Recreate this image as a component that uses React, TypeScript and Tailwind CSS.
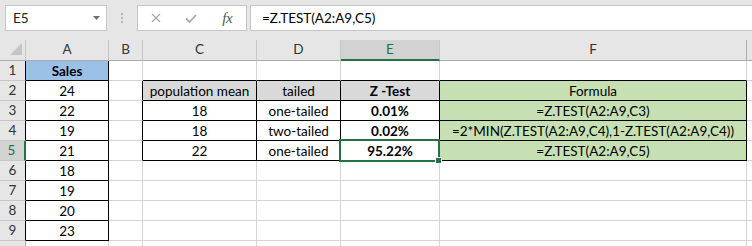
import React from "react";

const FONT = "font-['Lato','Liberation_Sans',sans-serif]";

type CellDef = { t?: string; bold?: boolean; bg?: string };

const data: Record<string, CellDef> = {
  "1-1": { t: "Sales", bold: true, bg: "bg-[#9bc2e6]" },
  "2-1": { t: "24" },
  "3-1": { t: "22" },
  "4-1": { t: "19" },
  "5-1": { t: "21" },
  "6-1": { t: "18" },
  "7-1": { t: "19" },
  "8-1": { t: "20" },
  "9-1": { t: "23" },
  "2-3": { t: "population mean", bg: "bg-[#d9d9d9]" },
  "2-4": { t: "tailed", bg: "bg-[#d9d9d9]" },
  "2-5": { t: "Z -Test", bold: true, bg: "bg-[#d9d9d9]" },
  "2-6": { t: "Formula", bg: "bg-[#c6e0b4]" },
  "3-3": { t: "18" },
  "3-4": { t: "one-tailed" },
  "3-5": { t: "0.01%", bold: true },
  "3-6": { t: "=Z.TEST(A2:A9,C3)", bg: "bg-[#c6e0b4]" },
  "4-3": { t: "18" },
  "4-4": { t: "two-tailed" },
  "4-5": { t: "0.02%", bold: true },
  "4-6": { t: "=2*MIN(Z.TEST(A2:A9,C4),1-Z.TEST(A2:A9,C4))", bg: "bg-[#c6e0b4]" },
  "5-3": { t: "22" },
  "5-4": { t: "one-tailed" },
  "5-5": { t: "95.22%", bold: true },
  "5-6": { t: "=Z.TEST(A2:A9,C5)", bg: "bg-[#c6e0b4]" },
};

const inRegion = (r: number, c: number) =>
  (c === 1 && r >= 1 && r <= 9) || (c >= 3 && c <= 6 && r >= 2 && r <= 5);

const LETTERS = ["", "A", "B", "C", "D", "E", "F", ""];

function HeaderRow() {
  return (
    <>
      <div className="relative bg-[#e6e6e6] border-r border-b border-r-[#c6c6c6] border-b-[#ababab]">
        <svg className="absolute left-[10px] top-[3px]" width="13" height="13" viewBox="0 0 13 13">
          <polygon points="0,12 12,0 12,12" fill="#c4c4c4" />
        </svg>
      </div>
      {LETTERS.slice(1).map((l, i) => {
        const c = i + 1;
        if (c === 5) {
          return (
            <div
              key={c}
              className="flex items-center justify-center bg-[#d2d2d2] border-r border-b-2 border-r-[#c6c6c6] border-b-[#217346] text-[#217346] text-[13.5px] leading-none pt-px"
            >
              {l}
            </div>
          );
        }
        return (
          <div
            key={c}
            className={
              "flex items-center justify-center bg-[#e6e6e6] border-b border-b-[#ababab] text-[#333] text-[13.5px] leading-none " +
              (c === 6 ? "border-r border-r-[#ababab]" : c === 7 ? "" : "border-r border-r-[#c6c6c6]")
            }
          >
            {l}
          </div>
        );
      })}
    </>
  );
}

function DataRow({ r }: { r: number }) {
  const last = r === 10;
  const cells: React.ReactNode[] = [];
  if (r === 5) {
    cells.push(
      <div
        key="h"
        className="flex items-center justify-center bg-[#d2d2d2] border-r-2 border-b border-r-[#217346] border-b-[#c6c6c6] text-[#217346] text-[13.5px] leading-none pr-px pt-px"
      >
        {r}
      </div>
    );
  } else {
    cells.push(
      <div
        key="h"
        className={
          "flex justify-center items-center leading-none bg-[#e6e6e6] border-r text-[#333] text-[13.5px] pt-px " +
          (last ? "" : "border-b border-b-[#c6c6c6] ") +
          (inRegion(r, 1) ? "border-r-black" : "border-r-[#ababab]")
        }
      >
        {last ? "" : r}
      </div>
    );
  }
  for (let c = 1; c <= 7; c++) {
    const d = data[`${r}-${c}`] || {};
    const rBlack = inRegion(r, c) || inRegion(r, c + 1);
    const bBlack = inRegion(r, c) || inRegion(r + 1, c);
    const cls =
      "flex items-center justify-center whitespace-nowrap text-[13.5px] leading-none text-black pt-[2px] " +
      (c === 7 ? "" : "border-r " + (rBlack ? "border-r-black " : "border-r-[#d4d4d4] ")) +
      (last ? "" : "border-b " + (bBlack ? "border-b-black " : "border-b-[#d4d4d4] ")) +
      (d.bg ? d.bg + " " : "bg-white ") +
      (d.bold ? "font-bold" : "font-normal");
    cells.push(
      <div key={c} className={cls}>
        {d.t ?? ""}
      </div>
    );
  }
  return <>{cells}</>;
}

export default function App() {
  const rows = [1, 2, 3, 4, 5, 6, 7, 8, 9, 10];
  return (
    <div className={"relative w-[752px] h-[246px] overflow-hidden bg-white " + FONT}>
      {/* Formula bar area */}
      <div className="h-[40px] bg-[#e6e6e6] flex items-start pt-[5px]">
        <div className="ml-[5px] w-[102px] h-[26px] shrink-0 bg-white border border-[#c6c6c6] flex items-center pl-[7px] pr-[6px] text-[13.5px] text-[#222]">
          <span className="flex-1">E5</span>
          <svg width="7" height="4" viewBox="0 0 7 4" className="mt-[-1px]">
            <polygon points="0,0 7,0 3.5,4" fill="#6f6f6f" />
          </svg>
        </div>
        <div className="w-[30px] h-[26px] shrink-0 flex flex-col items-center pt-[8px] gap-[2px]">
          <div className="w-[2px] h-[2px] bg-[#b4b4b4]" />
          <div className="w-[2px] h-[2px] bg-[#b4b4b4]" />
          <div className="w-[2px] h-[2px] bg-[#b4b4b4]" />
        </div>
        <div className="w-[110px] h-[26px] shrink-0 bg-white border border-[#c6c6c6] flex items-center">
          <div className="w-[36px] flex justify-center">
            <svg width="10" height="10" viewBox="0 0 10 10">
              <path d="M1 1 L9 9 M9 1 L1 9" stroke="#a9a9a9" strokeWidth="1.3" fill="none" />
            </svg>
          </div>
          <div className="w-[35px] flex justify-center">
            <svg width="12" height="9" viewBox="0 0 12 9">
              <path d="M1 4.5 L4.5 8 L11 1" stroke="#a9a9a9" strokeWidth="1.8" fill="none" />
            </svg>
          </div>
          <div className="w-[38px] flex justify-center">
            <span className="font-['Liberation_Serif',serif] italic text-[15px] leading-none text-[#555] tracking-[-0.5px]">
              fx
            </span>
          </div>
        </div>
        <div className="ml-[3px] w-[520px] h-[26px] shrink-0 bg-white border border-[#c6c6c6] flex items-center pl-[11px] text-[13.5px] text-black">
          =Z.TEST(A2:A9,C5)
        </div>
      </div>

      {/* Grid */}
      <div className="grid grid-cols-[26px_83px_34px_114px_84px_99px_307px_6px] grid-rows-[21px_repeat(9,20px)_6px]">
        <HeaderRow />
        {rows.map((r) => (
          <DataRow key={r} r={r} />
        ))}
      </div>

      {/* Selection */}
      <div className="absolute left-[339px] top-[139px] w-[101px] h-[23px] border-2 border-[#217346] pointer-events-none" />
      <div className="absolute left-[435px] top-[157px] w-[7px] h-[7px] bg-white flex items-center justify-center">
        <div className="w-[5px] h-[5px] bg-[#217346]" />
      </div>
    </div>
  );
}
